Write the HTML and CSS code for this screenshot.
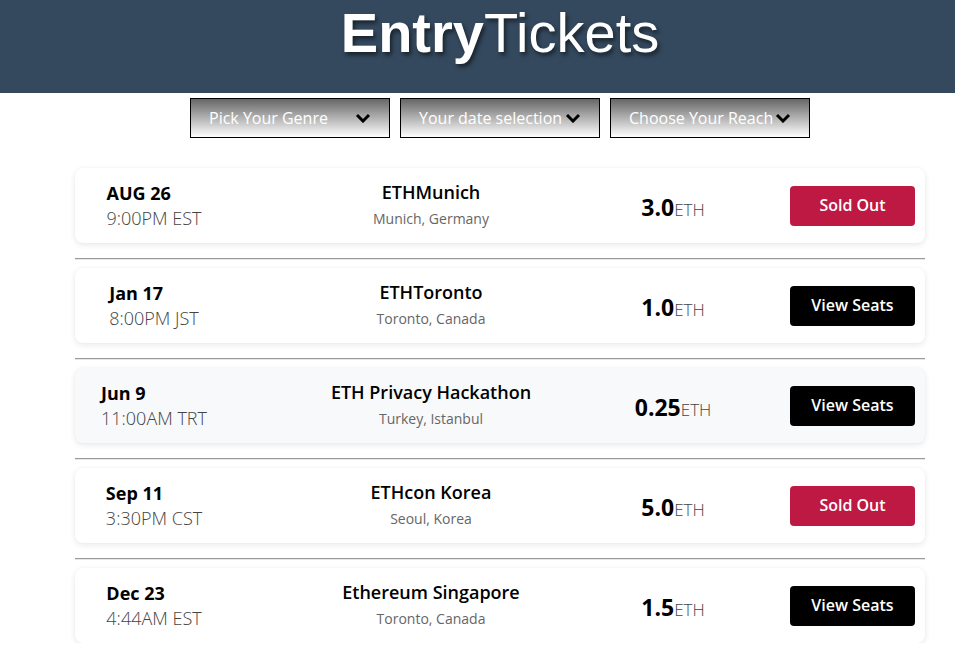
FILE: index.html
```html
<!DOCTYPE html>
<html lang="en">
<head>
<meta charset="utf-8">
<title>EntryTickets</title>
<link rel="stylesheet" href="styles.css">
</head>
<body>
<header class="header">
  <h1 class="title"><b>Entry</b>Tickets</h1>
</header>
<main class="page">
  <div class="filters">
    <div class="select"><span>Pick Your Genre</span><svg class="chev" width="16" height="10" viewBox="0 0 16 10"><path d="M2 2 L8 8 L14 2" fill="none" stroke="#000" stroke-width="3"/></svg></div>
    <div class="select"><span>Your date selection</span><svg class="chev" width="16" height="10" viewBox="0 0 16 10"><path d="M2 2 L8 8 L14 2" fill="none" stroke="#000" stroke-width="3"/></svg></div>
    <div class="select"><span>Choose Your Reach</span><svg class="chev" width="16" height="10" viewBox="0 0 16 10"><path d="M2 2 L8 8 L14 2" fill="none" stroke="#000" stroke-width="3"/></svg></div>
  </div>

  <section class="list">
    <div class="card">
      <div class="when"><div class="wbox"><div class="date">AUG 26</div><div class="time">9:00PM EST</div></div></div>
      <div class="event"><div class="name">ETHMunich</div><div class="place">Munich, Germany</div></div>
      <div class="price"><span class="amt">3.0</span><span class="cur">ETH</span></div>
      <div class="action"><button class="btn sold">Sold Out</button></div>
    </div>
    <hr class="sep">
    <div class="card">
      <div class="when"><div class="wbox"><div class="date">Jan 17</div><div class="time">8:00PM JST</div></div></div>
      <div class="event"><div class="name">ETHToronto</div><div class="place">Toronto, Canada</div></div>
      <div class="price"><span class="amt">1.0</span><span class="cur">ETH</span></div>
      <div class="action"><button class="btn view">View Seats</button></div>
    </div>
    <hr class="sep">
    <div class="card hover">
      <div class="when"><div class="wbox"><div class="date">Jun 9</div><div class="time">11:00AM TRT</div></div></div>
      <div class="event"><div class="name">ETH Privacy Hackathon</div><div class="place">Turkey, Istanbul</div></div>
      <div class="price"><span class="amt">0.25</span><span class="cur">ETH</span></div>
      <div class="action"><button class="btn view">View Seats</button></div>
    </div>
    <hr class="sep">
    <div class="card">
      <div class="when"><div class="wbox"><div class="date">Sep 11</div><div class="time">3:30PM CST</div></div></div>
      <div class="event"><div class="name">ETHcon Korea</div><div class="place">Seoul, Korea</div></div>
      <div class="price"><span class="amt">5.0</span><span class="cur">ETH</span></div>
      <div class="action"><button class="btn sold">Sold Out</button></div>
    </div>
    <hr class="sep">
    <div class="card">
      <div class="when"><div class="wbox"><div class="date">Dec 23</div><div class="time">4:44AM EST</div></div></div>
      <div class="event"><div class="name">Ethereum Singapore</div><div class="place">Toronto, Canada</div></div>
      <div class="price"><span class="amt">1.5</span><span class="cur">ETH</span></div>
      <div class="action"><button class="btn view">View Seats</button></div>
    </div>
  </section>
</main>
</body>
</html>
```

FILE: styles.css
```css
html, body {
  margin: 0;
  padding: 0;
  background: #fff;
  overflow-x: hidden;
}

body {
  font-family: "Open Sans", "Liberation Sans", sans-serif;
  color: #000;
}

.header {
  background: #34495e;
  height: 93px;
  padding-left: 45px;
  box-sizing: border-box;
}

.title {
  margin: 0;
  font-family: "Liberation Sans", Arial, sans-serif;
  font-size: 56px;
  font-weight: 400;
  line-height: normal;
  color: #fff;
  text-align: center;
  text-shadow: 2px 3px 4px rgba(0, 0, 0, 0.55);
}

.title b {
  font-weight: 700;
}

.page {
  padding-left: 45px;
}

.filters {
  display: flex;
  justify-content: center;
  gap: 10px;
  margin-top: 5px;
}

.select {
  width: 200px;
  height: 40px;
  box-sizing: border-box;
  border: 1px solid #000;
  background: linear-gradient(#666666, #ffffff);
  display: flex;
  align-items: center;
  justify-content: space-between;
  padding: 0 18px 0 18px;
  color: #fff;
  font-size: 16px;
  white-space: nowrap;
}

.chev {
  flex: none;
}

.list {
  width: 850px;
  margin: 30px auto 0;
}

.card {
  height: 75px;
  box-sizing: border-box;
  background: #fff;
  border-radius: 8px;
  box-shadow: 0 2px 6px rgba(0, 0, 0, 0.09), 0 0 2px rgba(0, 0, 0, 0.04);
  display: grid;
  grid-template-columns: 158px 396px 88px 1fr;
  align-items: center;
  padding-right: 10px;
}

.card.hover {
  background: #f8f9fb;
}

.when {
  display: flex;
  justify-content: center;
}

.date {
  font-size: 18px;
  font-weight: 700;
  line-height: 25px;
}

.time {
  font-family: "Open Sans Light", "Open Sans", sans-serif;
  font-size: 18px;
  font-weight: 300;
  line-height: 25px;
  color: #444;
}

.event {
  text-align: center;
}

.name {
  font-size: 18px;
  font-weight: 600;
  line-height: 25px;
  padding-top: 1px;
}

.place {
  font-size: 14px;
  line-height: 27px;
  color: #666;
}

.price {
  display: flex;
  justify-content: center;
  align-items: baseline;
  white-space: nowrap;
  padding-top: 2px;
}

.amt {
  font-size: 23px;
  font-weight: 700;
}

.cur {
  font-family: "Open Sans Light", "Open Sans", sans-serif;
  font-size: 17px;
  font-weight: 300;
  color: #444;
}

.action {
  display: flex;
  justify-content: flex-end;
}

.btn {
  width: 125px;
  height: 40px;
  border: none;
  border-radius: 4px;
  color: #fff;
  font-family: "Open Sans", sans-serif;
  font-size: 16px;
  font-weight: 600;
  padding: 0 0 2px;
}

.btn.sold {
  background: #bd1942;
}

.btn.view {
  background: #000;
}

.sep {
  height: 0;
  margin: 15px 0 8px;
  border: none;
  border-top: 1px solid #9a9a9a;
  border-bottom: 1px solid #e6e6e6;
}
```
